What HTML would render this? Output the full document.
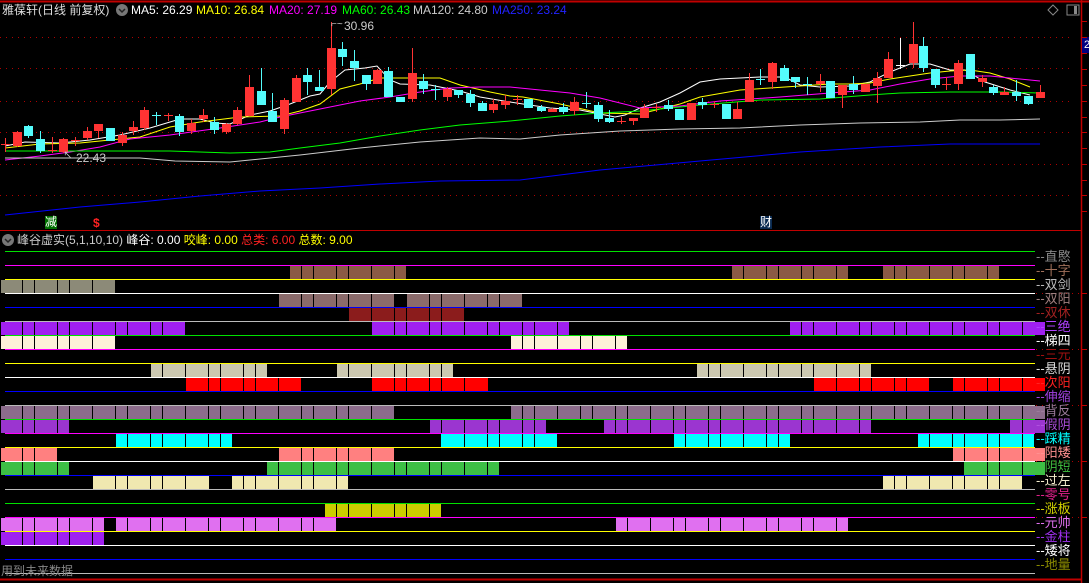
<!DOCTYPE html>
<html><head><meta charset="utf-8"><style>
html,body{margin:0;padding:0;background:#000;width:1089px;height:583px;overflow:hidden;font-family:"Liberation Sans","Noto Sans CJK SC",sans-serif}
.t{position:absolute;font-size:12px;white-space:nowrap;line-height:14px}
.lb{position:absolute;left:1036px;font-size:13px;line-height:14px;white-space:nowrap}
</style></head><body>
<svg id="s" width="1089" height="583" style="position:absolute;left:0;top:0">
<line x1="0" y1="1.5" x2="1089" y2="1.5" stroke="#c00000" stroke-width="2"/>
<line x1="0" y1="230.5" x2="1081" y2="230.5" stroke="#c00000"/>
<line x1="0" y1="579.5" x2="1081" y2="579.5" stroke="#c00000" stroke-width="2"/>
<line x1="1081.5" y1="0" x2="1081.5" y2="583" stroke="#c00000" stroke-width="1.5"/>
<g id="grid" stroke="#b00000" stroke-dasharray="1,5"></g>
<g id="ma" fill="none" stroke-width="1"></g>
<g id="cd"></g>
<g id="rows"></g>
<rect x="1082" y="37" width="7" height="16" fill="#000080"/>
<rect x="1067" y="5" width="12" height="10" fill="none" stroke="#888" stroke-width="1"/>
<rect x="1074" y="6" width="3" height="8" fill="#888"/>
<path d="M1053 5 L1058 10 L1053 15 L1048 10 Z" fill="none" stroke="#888"/>
<circle cx="122" cy="10" r="6" fill="#777"/><path d="M119 9 L122 12 L125 9" stroke="#222" stroke-width="1.5" fill="none"/>
<circle cx="8" cy="240" r="6" fill="#777"/><path d="M5 239 L8 242 L11 239" stroke="#222" stroke-width="1.5" fill="none"/>
<rect x="45" y="216" width="12" height="13" fill="#007000"/>
<rect x="760" y="216" width="12" height="13" fill="#0a2a50"/>
</svg>
<div class="t" style="left:2px;top:3px;color:#ddd">雅葆轩(日线 前复权)</div>
<div class="t" style="left:131px;top:3px;color:#fff">MA5: 26.29</div>
<div class="t" style="left:196px;top:3px;color:#ff0">MA10: 26.84</div>
<div class="t" style="left:269px;top:3px;color:#f0f">MA20: 27.19</div>
<div class="t" style="left:342px;top:3px;color:#0f0">MA60: 26.43</div>
<div class="t" style="left:413px;top:3px;color:#ccc">MA120: 24.80</div>
<div class="t" style="left:492px;top:3px;color:#22f">MA250: 23.24</div>
<div class="t" style="left:344px;top:19px;color:#ccc">30.96</div>
<div class="t" style="left:76px;top:151px;color:#ccc">22.43</div>
<div class="t" style="left:331px;top:18px;color:#ccc;font-size:10px">⌐~</div>
<div class="t" style="left:63px;top:150px;color:#ccc;font-size:10px">↖</div>
<div class="t" style="left:1084px;top:38px;color:#fff;font-size:11px">2</div>
<div class="t" style="left:45px;top:215px;color:#fff">减</div>
<div class="t" style="left:93px;top:216px;color:#f22;font-weight:bold">$</div>
<div class="t" style="left:760px;top:215px;color:#fff">财</div>
<div class="t" style="left:17px;top:233px;color:#ccc">峰谷虚实(5,1,10,10) <span style="color:#fff">峰谷: 0.00</span> <span style="color:#ff0">咬峰: 0.00</span> <span style="color:#f22">总类: 6.00</span> <span style="color:#ff0">总数: 9.00</span></div>
<div class="t" style="left:1px;top:564px;color:#888">用到未来数据</div>
<div class="lb" style="top:250px;color:#888">--直愍</div>
<div class="lb" style="top:264px;color:#a0705a">--十字</div>
<div class="lb" style="top:278px;color:#bbb">--双剑</div>
<div class="lb" style="top:292px;color:#a08080">--双阳</div>
<div class="lb" style="top:306px;color:#a02020">--双休</div>
<div class="lb" style="top:320px;color:#b040ff">--三绝</div>
<div class="lb" style="top:334px;color:#fff">--梯四</div>
<div class="lb" style="top:348px;color:#a01010">--三元</div>
<div class="lb" style="top:362px;color:#ddd">--悬阴</div>
<div class="lb" style="top:376px;color:#f22">--次阳</div>
<div class="lb" style="top:390px;color:#a040e0">--伸缩</div>
<div class="lb" style="top:404px;color:#9c7c9c">--背反</div>
<div class="lb" style="top:418px;color:#b050e0">--假阴</div>
<div class="lb" style="top:432px;color:#0ff">--踩精</div>
<div class="lb" style="top:446px;color:#ff9090">--阳矮</div>
<div class="lb" style="top:460px;color:#40c040">--阴短</div>
<div class="lb" style="top:474px;color:#f8f0d0">--过左</div>
<div class="lb" style="top:488px;color:#e0208a">--零号</div>
<div class="lb" style="top:502px;color:#d0d000">--涨板</div>
<div class="lb" style="top:516px;color:#e070f0">--元帅</div>
<div class="lb" style="top:530px;color:#a030f0">--金柱</div>
<div class="lb" style="top:544px;color:#fff">--矮将</div>
<div class="lb" style="top:558px;color:#8b8b00">--地量</div>
<script>
var NS="http://www.w3.org/2000/svg";
function el(p,t,a){var e=document.createElementNS(NS,t);for(var k in a)e.setAttribute(k,a[k]);p.appendChild(e);return e;}
var g=document.getElementById('grid');
[37,68,101,132,164,195].forEach(function(y){el(g,'line',{x1:0,y1:y+.5,x2:1074,y2:y+.5});});
var s=document.getElementById('s');
[21,37,53,69,85,101,117,132,148,164,180,195,211,293,349,405,461,517].forEach(function(y){el(s,'line',{x1:1081,y1:y+.5,x2:1087,y2:y+.5,stroke:'#c00000'});});
[293,349,405,461,517].forEach(function(y){el(g,'line',{x1:1036,y1:y+.5,x2:1080,y2:y+.5});});
var ma=document.getElementById('ma');
var L={
'#fff':[[5,146],[25,142],[60,143],[90,140],[120,135],[150,128],[170,122],[180,119],[200,119],[215,123],[230,124],[250,115],[270,111],[290,104],[310,96],[320,94],[330,82],[345,70],[365,68],[377,66],[390,80],[400,84],[430,85],[460,91],[480,97],[510,102],[523,104],[550,108],[580,110],[600,114],[615,117],[625,115],[640,108],[660,102],[680,93],[700,82],[720,79],[760,77],[785,77],[800,85],[820,87],[850,86],[870,82],[890,72],[910,64],[930,64],[950,70],[965,70],[985,82],[1010,90],[1030,95]],
'#ff0':[[5,148],[40,144],[80,143],[110,140],[140,137],[170,127],[200,122],[240,117],[280,116],[300,111],[320,104],[340,89],[360,84],[380,78],[420,78],[440,78],[460,85],[490,92],[510,96],[523,97],[560,104],[600,113],[640,114],[680,104],[700,97],[740,90],[770,88],[800,86],[830,84],[850,84],[870,83],[890,79],[910,76],[930,73],[950,71],[970,70],[990,73],[1010,79],[1030,87]],
'#f0f':[[5,160],[40,156],[70,152],[100,147],[130,139],[170,135],[220,128],[260,122],[280,117],[300,113],[330,107],[360,101],[390,97],[420,92],[450,88],[480,87],[510,87],[540,90],[570,93],[600,98],[620,103],[640,108],[680,106],[720,101],[780,97],[830,93],[870,90],[900,84],[930,79],[960,76],[990,76],[1020,79],[1040,81]],
'#0f0':[[5,151],[170,151],[230,153],[270,152],[300,148],[340,143],[380,136],[420,130],[460,125],[510,121],[560,116],[600,113],[640,111],[700,105],[760,100],[820,99],[870,95],[900,93],[950,92],[1000,92],[1040,93]],
'#ccc':[[5,158],[140,158],[175,161],[230,162],[260,159],[300,155],[360,148],[420,142],[480,138],[520,139],[560,135],[620,131],[680,129],[740,128],[800,125],[860,123],[920,122],[960,120],[1000,120],[1040,119]],
'#00f':[[5,215],[80,207],[140,202],[200,196],[260,191],[320,188],[380,184],[440,181],[520,180],[600,170],[700,161],[800,152],[880,147],[950,144],[1040,144]]};
for(var c in L){el(ma,'polyline',{points:L[c].map(function(p){return p.join(',')}).join(' '),stroke:c});}
var C=[[5,'r',144,145,138,152],[17,'r',132,146,131,147],[28,'c',126,136,125,138],[40,'c',139,151,131,153],[52,'r',150,151,137,153],[63,'r',139,152,138,153],[75,'r',140,141,137,146],[87,'r',131,138,127,140],[98,'r',124,131,124,138],[110,'c',128,141,128,141],[122,'r',135,143,132,146],[133,'r',127,131,121,135],[144,'r',110,128,107,130],[156,'c',115,116,112,125],[168,'r',115,116,113,121],[179,'c',116,132,114,136],[191,'r',123,131,119,134],[203,'r',115,119,109,122],[214,'c',122,130,117,134],[226,'r',124,132,123,134],[237,'r',110,124,107,125],[249,'r',87,116,75,116],[261,'c',91,105,68,105],[272,'c',111,122,93,122],[284,'r',100,129,98,134],[296,'r',78,102,75,102],[307,'c',75,82,68,95],[319,'c',87,91,70,91],[331,'r',48,89,22,95],[342,'c',49,57,42,66],[354,'c',61,68,50,81],[366,'c',75,84,75,90],[377,'r',70,84,69,84],[388,'c',71,97,67,97],[400,'c',97,102,97,102],[412,'r',73,99,48,102],[423,'c',81,89,74,94],[435,'c',89,90,85,100],[447,'r',89,97,87,101],[458,'c',90,95,90,98],[470,'c',94,103,90,107],[482,'c',103,111,101,111],[493,'r',104,110,99,113],[505,'r',101,105,95,109],[517,'r',99,100,95,105],
[528,'c',99,108,99,108],[541,'c',107,111,105,112],[552,'r',109,112,108,112],[563,'c',107,112,103,114],[574,'r',102,111,97,115],[586,'c',103,104,92,108],[598,'c',105,119,102,122],[609,'c',118,122,110,123],[621,'r',121,122,117,124],[633,'r',118,121,118,125],[644,'r',108,118,104,118],[656,'r',107,108,104,112],[668,'c',105,109,100,111],[679,'c',109,120,109,120],[691,'r',103,120,103,120],[702,'c',102,105,98,109],[714,'r',104,105,101,108],[726,'c',104,119,104,119],[737,'r',109,119,102,119],[749,'r',80,102,73,102],[760,'c',79,80,69,85],[772,'r',63,82,62,89],[784,'c',68,81,65,81],[795,'c',77,82,77,88],[807,'c',84,85,77,95],[820,'r',81,84,74,92],[830,'c',81,98,81,98],[842,'r',85,95,85,108],[853,'c',84,90,76,94],[865,'r',84,92,84,92],[877,'r',78,86,72,103],[888,'r',59,78,52,78],[900,'w',65,66,38,69],[913,'r',44,63,22,68],[923,'c',46,68,37,72],[935,'c',69,85,69,88],[946,'r',84,85,77,90],[958,'r',63,84,60,90],[970,'c',54,79,54,79],[982,'r',78,82,75,87],[993,'c',87,93,85,95],[1004,'r',92,95,87,95],[1016,'c',92,96,80,101],[1028,'c',96,104,96,105],[1040,'r',92,98,85,98]];
var cd=document.getElementById('cd');
var col={r:'#ff3333',c:'#54fcfc',w:'#fff'};
C.forEach(function(k){var f=col[k[1]];el(cd,'line',{x1:k[0]+.5,y1:k[4],x2:k[0]+.5,y2:k[5],stroke:f});
el(cd,'rect',{x:k[0]-4,y:k[2],width:9,height:Math.max(1,k[3]-k[2]),fill:f});});
var rows=document.getElementById('rows');
var lc=['#00e000','#f0f','#ff0','#fff','#00f','#bbb'];
for(var i=0;i<=23;i++){var y=251+14*i;el(rows,'line',{x1:5,y1:y+.5,x2:1035,y2:y+.5,stroke:lc[i%6]});}
var d=[12,23,12,23,23],x=22,j=0,SP=[];
while(x<1046){SP.push(x);x+=d[j%5];j++;}
var B=[[1,'#8b5a45',[[290,406],[732,848],[883,999]]],[2,'#8c8a78',[[1,115]]],[3,'#8b6b6b',[[279,394],[407,522]]],[4,'#8b1c1c',[[349,464]]],
[5,'#a020f0',[[1,185],[372,569],[790,1045]]],[6,'#fdf0d8',[[1,115],[511,627]]],[8,'#ccc8b0',[[151,267],[337,453],[697,871]]],
[9,'#ff0000',[[186,301],[372,488],[814,929],[953,1045]]],[11,'#8c6c8c',[[1,394],[511,1045]]],[12,'#9b35d0',[[1,69],[430,546],[604,871],[1010,1045]]],
[13,'#00ffff',[[116,232],[441,557],[674,790],[918,1034]]],[14,'#ff8080',[[1,57],[279,394],[953,1045]]],[15,'#3dbf45',[[1,69],[267,499],[964,1045]]],
[16,'#f0e8b0',[[93,209],[232,348],[883,1022]]],[18,'#cccc00',[[325,441]]],[19,'#e070f0',[[1,104],[116,336],[616,848]]],[20,'#a020f0',[[1,104]]]];
B.forEach(function(b){var y=251+14*b[0]+1;b[2].forEach(function(r){el(rows,'rect',{x:r[0],y:y,width:r[1]-r[0],height:13,fill:b[1]});
SP.forEach(function(sx){if(sx>r[0]&&sx<r[1]-1)el(rows,'rect',{x:sx,y:y,width:1,height:13,fill:'#000'});});});});
</script>
</body></html>
